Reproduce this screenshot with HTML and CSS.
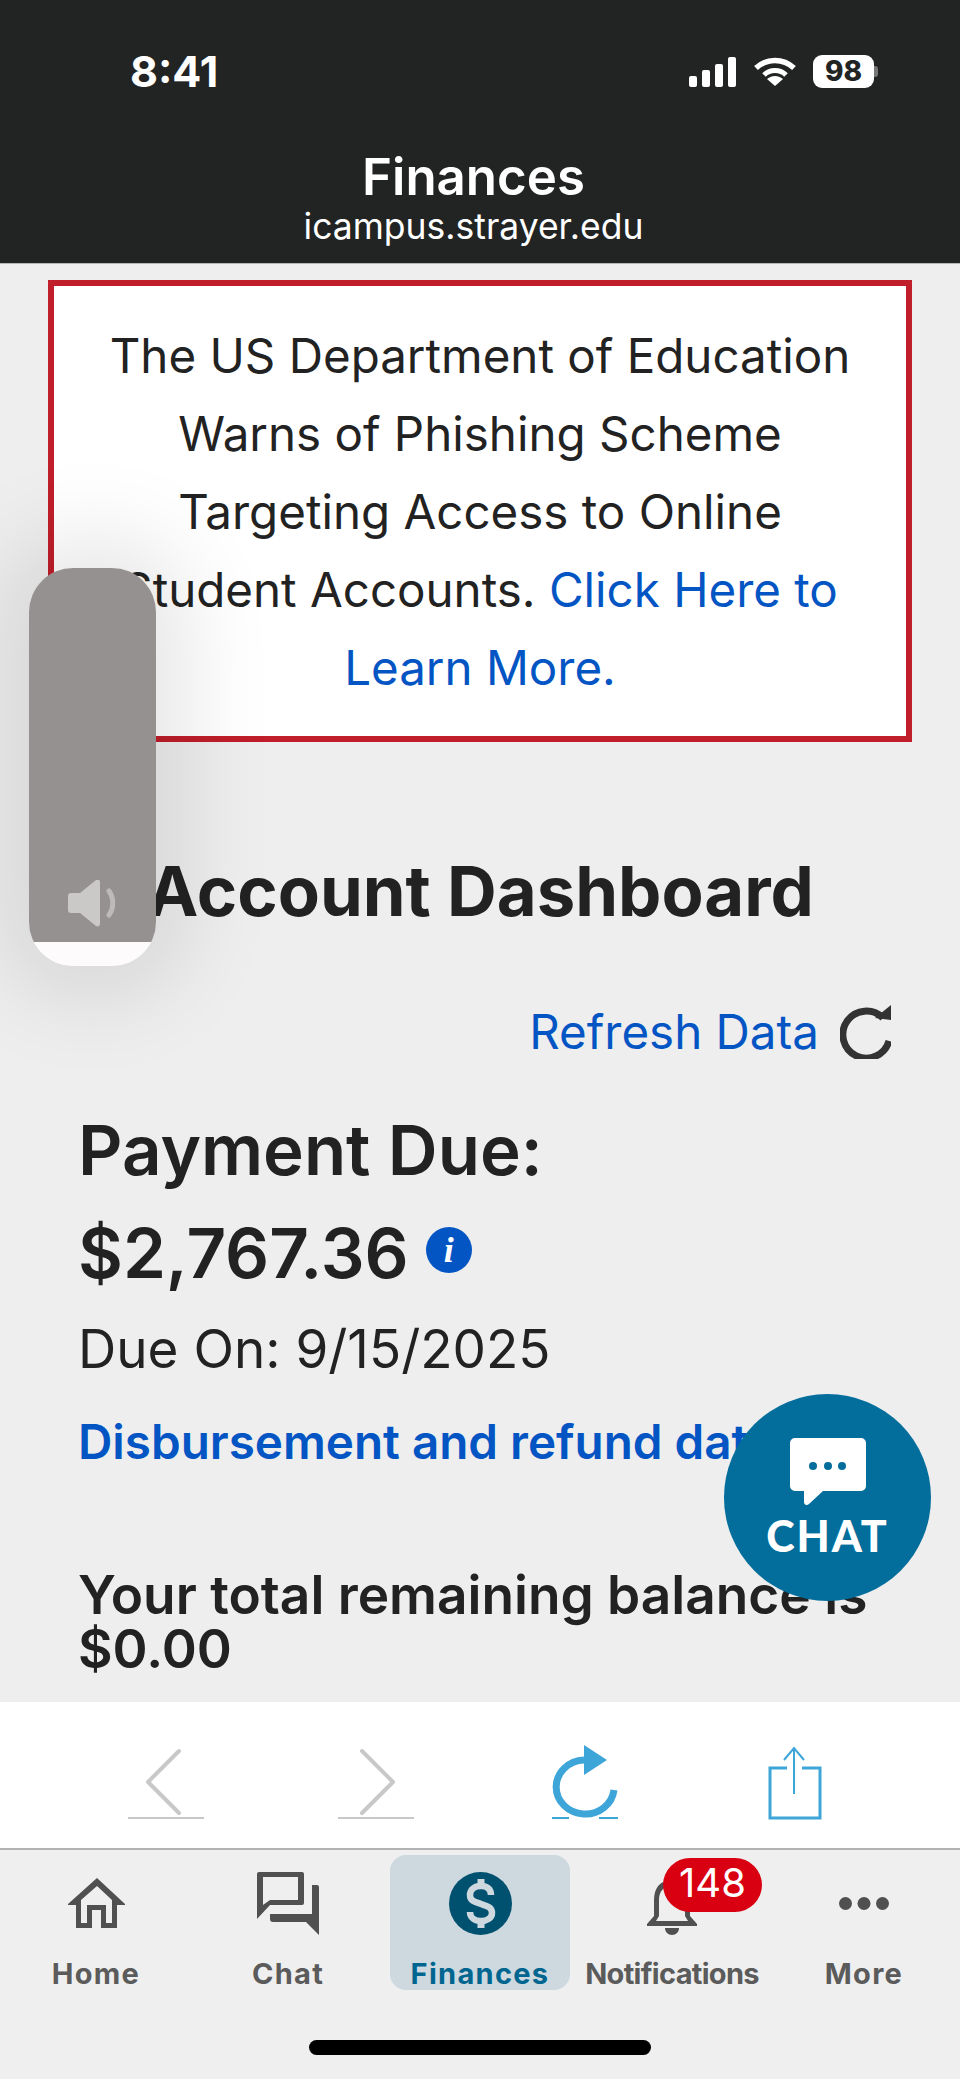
FILE: index.html
```html
<!DOCTYPE html>
<html>
    <head>
        <title>Finances</title>
        <link rel="stylesheet" href="styles.css">
    </head>
    <body>
        <header class="topbar">
            <div class="status">
                <span class="clock">8:41</span>
                <div class="status-icons">
                    <svg class="signal" width="47" height="30" viewBox="0 0 47 30"><rect x="0" y="19" width="8" height="11" rx="2"/><rect x="13" y="13" width="8" height="17" rx="2"/><rect x="26" y="7" width="8" height="23" rx="2"/><rect x="39" y="0" width="8" height="30" rx="2"/></svg>
                    <svg class="wifi" width="42" height="29" viewBox="0 0 42 29"><path d="M2 11C13 1 29 1 40 11" fill="none" stroke="#fff" stroke-width="5.500"/><path d="M10 18C16 12 26 12 32 18" fill="none" stroke="#fff" stroke-width="5"/><path d="M21 29L13 22C18 18 24 18 29 22z" fill="#fff"/></svg>
                    <span class="battery">98</span>
                    <span class="battery-cap"></span>
                </div>
            </div>
            <div class="title">Finances</div>
            <div class="host">icampus.strayer.edu</div>
        </header>

        <main class="content">
            <div class="notice">
                The US Department of Education Warns of Phishing Scheme Targeting Access to Online Student Accounts.
                <a href="#">Click Here to Learn More.</a>
            </div>
            <h1>Account Dashboard</h1>
            <div class="refresh">
                <a href="#">Refresh Data</a>
                <svg width="51" height="54" viewBox="0 0 51 54"><path d="M43 13A23.500 23.500 0 1 0 49 36" fill="none" stroke="#333" stroke-width="7"/><path d="M35 13L51 0V15z" fill="#333"/></svg>
            </div>
            <section class="payment">
                <h2>Payment Due:</h2>
                <div class="amount">
                    <h2>$2,767.36</h2>
                    <span class="info">i</span>
                </div>
                <p class="due">Due On: 9/15/2025</p>
                <a class="disburse" href="#">Disbursement and refund dates</a>
                <h3>Your total remaining balance is $0.00</h3>
            </section>

            <!-- volume overlay -->
            <div class="volume">
                <svg width="48" height="48" viewBox="0 0 48 48"><path d="M3 13h9L28 0c2-1 4 0 4 2v42c0 2-2 3-4 2L12 33H3c-2 0-3-1-3-3V16c0-2 1-3 3-3z" fill="#cbc8c8"/><path d="M41 11c5 7 5 17 0 24" fill="none" stroke="#bdbaba" stroke-width="5" stroke-linecap="round"/></svg>
            </div>

            <div class="chat-btn">
                <svg width="76" height="68" viewBox="0 0 76 68"><path d="M5 0h66a5 5 0 0 1 5 5v43a5 5 0 0 1-5 5H33L19 66c-2 2-5 1-5-2V53H5a5 5 0 0 1-5-5V5a5 5 0 0 1 5-5z" fill="#fff"/><circle cx="23" cy="28" r="4" fill="#036d9b"/><circle cx="38" cy="28" r="4" fill="#036d9b"/><circle cx="52" cy="28" r="4" fill="#036d9b"/></svg>
                <span>CHAT</span>
            </div>
        </main>

        <div class="toolbar">
            <svg width="76" height="72" viewBox="0 0 76 72"><path d="M51 3L20 34l31 31" fill="none" stroke="#c8c8c8" stroke-width="4" stroke-linecap="round" stroke-linejoin="round"/><path d="M0 70h76" stroke="#c8c8c8" stroke-width="2"/></svg>
            <svg width="76" height="72" viewBox="0 0 76 72"><path d="M24 3l31 31-31 31" fill="none" stroke="#c8c8c8" stroke-width="4" stroke-linecap="round" stroke-linejoin="round"/><path d="M0 70h76" stroke="#c8c8c8" stroke-width="2"/></svg>
            <svg width="68" height="76" viewBox="0 0 68 76"><path d="M32 16A29 27 0 1 0 62 46" fill="none" stroke="#3ea5d8" stroke-width="7"/><path d="M32 1L55 16 32 31z" fill="#3ea5d8"/><path d="M0 74h17M47 74h19" stroke="#3ea5d8" stroke-width="2"/></svg>
            <svg width="54" height="74" viewBox="0 0 54 74"><path d="M19 22H2V72H52V22H34" fill="none" stroke="#3ea5d8" stroke-width="3"/><path d="M26 48V2M16 14L26 2l10 12" fill="none" stroke="#3ea5d8" stroke-width="2"/></svg>
        </div>

        <nav class="tabs">
            <div class="tab">
                <div class="tab-icon">
                    <svg width="57" height="50" viewBox="0 0 57 50"><path d="M29 0L0 26v1h8V50H24V32h9V50H49V27h8V26zM29 8L44 22V45H38V27H19V45H13V22z" fill-rule="evenodd"/></svg>
                </div>
                <span>Home</span>
            </div>
            <div class="tab">
                <div class="tab-icon">
                    <svg width="62" height="63" viewBox="0 0 62 63"><path d="M2 0H45a2 2 0 0 1 2 2V31a2 2 0 0 1-2 2H13L0 47V2A2 2 0 0 1 2 0zM6 5V33l7-5H41V5z" fill-rule="evenodd"/><path d="M55 13h5a2 2 0 0 1 2 2V63L49 50H16a3 3 0 0 1-3-3V42H55z"/></svg>
                </div>
                <span>Chat</span>
            </div>
            <div class="tab active">
                <div class="tab-icon">
                    <svg width="63" height="63" viewBox="0 0 63 63"><circle cx="31.500" cy="31.500" r="31.500" fill="#00506f"/><path d="M42 23C42 17 38 14 32 14C25 14 21 18 21 23C21 29 26 30 32 32C38 34 43 35 43 41C43 46 38 49 32 49C26 49 21 46 21 40" fill="none" stroke="#cdd8df" stroke-width="6.500"/><path d="M32 7V16M32 47V56" stroke="#cdd8df" stroke-width="7"/></svg>
                </div>
                <span>Finances</span>
            </div>
            <div class="tab">
                <div class="tab-icon">
                    <svg class="bell" width="50" height="55" viewBox="0 0 50 55"><path d="M25 0C13 0 7 8 7 20V36L0 44v2H50V44L43 36V20C43 8 37 0 25 0zM25 6C34 6 38 12 38 20V36l3 5H9l3-5V20C12 12 16 6 25 6z" fill-rule="evenodd"/><path d="M18 48H32C32 52 29 55 25 55S18 52 18 48z"/></svg>
                </div>
                <span class="tight">Notifications</span>
                <b class="badge">148</b>
            </div>
            <div class="tab">
                <div class="tab-icon">
                    <svg width="50" height="13" viewBox="0 0 50 13"><circle cx="6.500" cy="6.500" r="6.500"/><circle cx="25" cy="6.500" r="6.500"/><circle cx="43.500" cy="6.500" r="6.500"/></svg>
                </div>
                <span>More</span>
            </div>
        </nav>
        <div class="home-bar"></div>
    </body>
</html>
```

FILE: styles.css
```css
* {
    box-sizing: border-box;
}
body {
    margin: 0;
    width: 960px;
    height: 2079px;
    overflow: hidden;
    display: flex;
    flex-direction: column;
    position: relative;
    background: #efefef;
    color: #222;
    font-family: "Inter", "Liberation Sans", sans-serif;
}
a {
    color: #0355c4;
    text-decoration: none;
}

/* top bar */
.topbar {
    height: 264px;
    flex: none;
    background: #222424;
    color: #fff;
    border-bottom: 1px solid #b5b5b5;
    text-align: center;
}
.status {
    height: 152px;
    padding: 50px 82px 0 130px;
    display: flex;
    justify-content: space-between;
    align-items: flex-start;
}
.clock {
    font-size: 43px;
    font-weight: 700;
    line-height: 43px;
}
.status-icons {
    display: flex;
    align-items: center;
    padding-top: 5px;
    fill: #fff;
}
.wifi {
    margin-left: 18px;
}
.battery {
    width: 61px;
    height: 33px;
    margin-left: 17px;
    border-radius: 9px;
    background: #fff;
    color: #222424;
    font-size: 28px;
    font-weight: 800;
    line-height: 33px;
}
.battery-cap {
    width: 4px;
    height: 11px;
    border-radius: 0 3px 3px 0;
    background: #777;
}
.title {
    font-size: 51px;
    font-weight: 600;
    line-height: 50px;
    margin-left: -13px;
}
.host {
    font-size: 35.500px;
    font-weight: 400;
    line-height: 50px;
    margin-left: -13px;
}

/* page content */
.content {
    height: 1438px;
    flex: none;
    position: relative;
    overflow: hidden;
    padding: 16px 48px 0;
    background: #eee;
}
.notice {
    height: 462px;
    border: 6px solid #bf1e2a;
    background: #fff;
    padding: 31px 46px 0;
    text-align: center;
    font-size: 47.500px;
    line-height: 78px;
}
h1 {
    margin: 106px 0 0;
    padding-left: 99px;
    font-size: 68.800px;
    font-weight: 700;
    line-height: 86px;
}
.refresh {
    display: flex;
    justify-content: flex-end;
    align-items: center;
    gap: 21px;
    margin-top: 71px;
    padding-right: 21px;
    font-size: 47.500px;
    line-height: 54px;
}
.payment {
    padding: 0 0 0 30px;
}
.payment h2 {
    margin: 0;
    font-size: 69px;
    font-weight: 600;
    line-height: 102px;
}
.payment > h2 {
    margin-top: 40px;
}
.amount {
    display: flex;
    align-items: center;
    gap: 17px;
    margin-top: 1px;
}
.info {
    width: 46px;
    height: 46px;
    margin-top: -6px;
    border-radius: 50%;
    background: #0355c4;
    color: #fff;
    font-family: "Liberation Serif", serif;
    font-size: 36px;
    font-style: italic;
    font-weight: 700;
    line-height: 46px;
    text-align: center;
}
.due {
    margin: 0;
    font-size: 53px;
    line-height: 90px;
}
.disburse {
    display: block;
    font-size: 47.600px;
    font-weight: 600;
    line-height: 96px;
    white-space: nowrap;
}
h3 {
    margin: 78px 0 0;
    font-size: 53.200px;
    font-weight: 600;
    line-height: 54px;
}

/* floating pieces */
.volume {
    position: absolute;
    left: 29px;
    top: 304px;
    width: 127px;
    height: 398px;
    padding-top: 312px;
    padding-left: 39px;
    border-radius: 44px;
    background: linear-gradient(#959190 374px, #fdfbfb 374px);
    box-shadow: 0 0 90px 30px rgba(0, 0, 0, 0.1);
}
.chat-btn {
    position: absolute;
    left: 724px;
    top: 1130px;
    width: 207px;
    height: 207px;
    border-radius: 50%;
    background: #036d9b;
    color: #fff;
    display: flex;
    flex-direction: column;
    align-items: center;
    padding-top: 44px;
    font-family: "Lato", sans-serif;
    font-size: 43px;
    font-weight: 900;
    letter-spacing: 2px;
    line-height: 60px;
}

/* browser toolbar */
.toolbar {
    height: 146px;
    flex: none;
    background: #fff;
    display: grid;
    grid-template-columns: 210px 214px 216px auto;
    align-items: end;
    padding: 0 0 28px 128px;
}

/* bottom tabs */
.tabs {
    flex: none;
    height: 143px;
    border-top: 2px solid #b2b2b2;
    display: grid;
    grid-template-columns: repeat(5, 192px);
    padding-top: 5px;
}
.tab {
    position: relative;
    height: 135px;
    display: flex;
    flex-direction: column;
    align-items: center;
    color: #5b5b5b;
    font-size: 29px;
    font-weight: 700;
    letter-spacing: 1.300px;
    line-height: 32px;
    fill: #505050;
}
.tab-icon {
    height: 99px;
    display: flex;
    align-items: center;
    justify-content: center;
}
.tab span {
    margin-top: 7px;
}
.tab .tight {
    letter-spacing: -0.7px;
}
.bell {
    margin-top: 9px;
}
.active {
    border-radius: 16px;
    background: #cdd8df;
    color: #00658f;
    width: 180px;
    margin-left: 6px;
}
.badge {
    position: absolute;
    left: 87px;
    top: 3px;
    width: 99px;
    height: 54px;
    border-radius: 27px;
    background: #d90012;
    color: #fff;
    font-size: 40px;
    font-weight: 400;
    letter-spacing: 0;
    line-height: 50px;
    text-align: center;
}
.home-bar {
    width: 342px;
    height: 15px;
    margin: 49px auto 0;
    border-radius: 8px;
    background: #000;
}
```
